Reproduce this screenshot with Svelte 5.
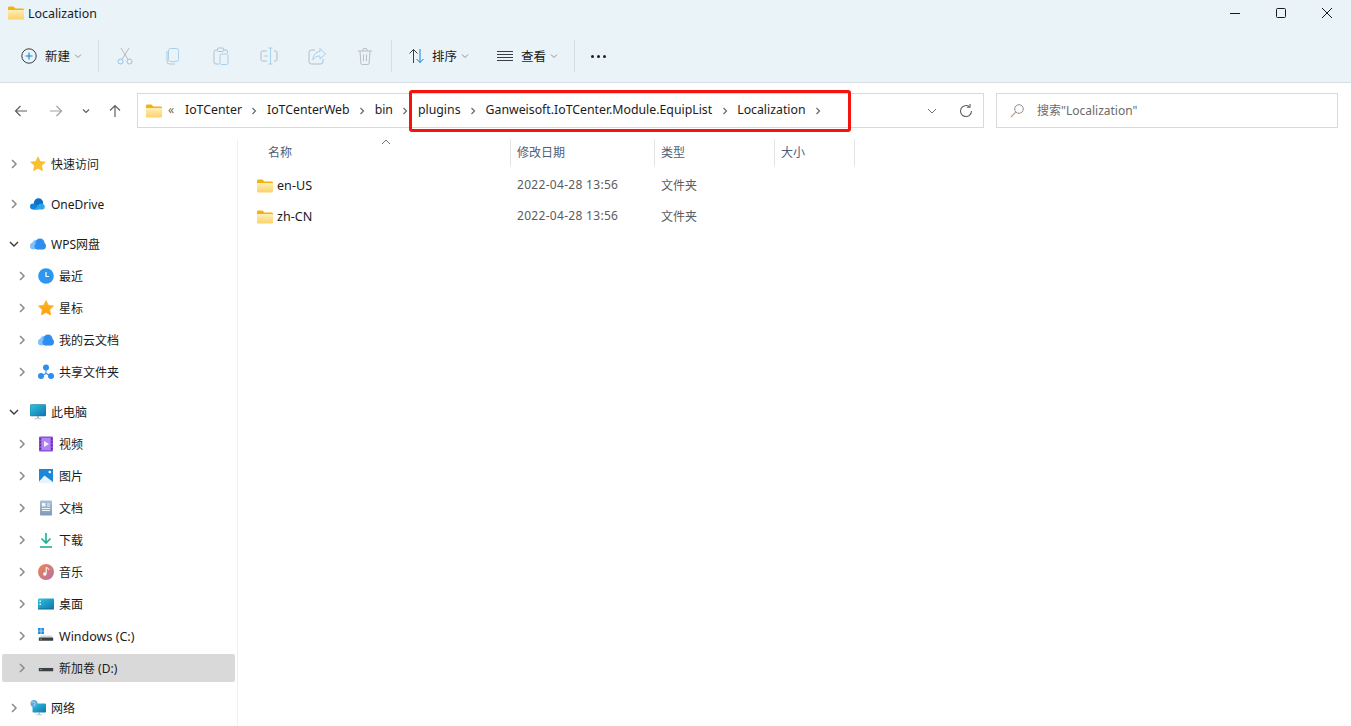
<script>
  const crumbs = ['IoTCenter', 'IoTCenterWeb', 'bin', 'plugins', 'Ganweisoft.IoTCenter.Module.EquipList', 'Localization']

  const disabledTools = ['cut', 'copy', 'paste', 'rename', 'share', 'trash']

  // sidebar groups, each row: label, icon, level, open, selected
  const groups = [
    [{ label: '快速访问', icon: 'star', level: 0 }],
    [{ label: 'OneDrive', icon: 'onedrive', level: 0 }],
    [
      { label: 'WPS网盘', icon: 'wps', level: 0, open: true },
      { label: '最近', icon: 'clock', level: 1 },
      { label: '星标', icon: 'starOrange', level: 1 },
      { label: '我的云文档', icon: 'wps', level: 1 },
      { label: '共享文件夹', icon: 'shared', level: 1 }
    ],
    [
      { label: '此电脑', icon: 'pc', level: 0, open: true },
      { label: '视频', icon: 'video', level: 1 },
      { label: '图片', icon: 'picture', level: 1 },
      { label: '文档', icon: 'doc', level: 1 },
      { label: '下载', icon: 'download', level: 1 },
      { label: '音乐', icon: 'music', level: 1 },
      { label: '桌面', icon: 'desktop', level: 1 },
      { label: 'Windows (C:)', icon: 'driveC', level: 1, latin: true },
      { label: '新加卷 (D:)', icon: 'drive', level: 1, selected: true }
    ],
    [{ label: '网络', icon: 'network', level: 0 }]
  ]

  const columns = [
    { label: '名称', width: 273, indent: 30 },
    { label: '修改日期', width: 144, indent: 6 },
    { label: '类型', width: 120, indent: 6 },
    { label: '大小', width: 80, indent: 6 }
  ]

  const files = [
    { name: 'en-US', date: '2022-04-28 13:56', type: '文件夹' },
    { name: 'zh-CN', date: '2022-04-28 13:56', type: '文件夹' }
  ]
</script>

{#snippet folder()}
  <svg class="ic16" viewBox="0 0 16 16">
    <path d="M0 3C0 2.200.6 1.500 1.400 1.500h4l2 2h7.200c.8 0 1.400.6 1.400 1.400V8H0z" fill="#f2b20f" />
    <path d="M0 5h15c.6 0 1 .4 1 1v7.200c0 .7-.6 1.300-1.300 1.300H1.300C.6 14.500 0 13.900 0 13.200z" fill="url(#faceGrad)" />
  </svg>
{/snippet}

{#snippet chevron(open)}
  <svg class="chev" viewBox="0 0 10 10" fill="none">
    {#if open}
      <path d="M1 3l4 4 4-4" stroke="#3b3b3b" stroke-width="1.4" />
    {:else}
      <path d="M3 1l4 4-4 4" stroke="#8a8a8a" stroke-width="1.5" />
    {/if}
  </svg>
{/snippet}

{#snippet caret()}
  <svg class="caret" viewBox="0 0 8 8" fill="none"><path d="M1 2.500l3 3 3-3" stroke="#8c9499" /></svg>
{/snippet}

{#snippet sep()}
  <svg class="crumb-sep" viewBox="0 0 8 10" fill="none"><path d="M2.500 2l3 3-3 3" stroke="#5f6b73" stroke-width="1.200" /></svg>
{/snippet}

{#snippet tool(name)}
  <svg class="ic20" viewBox="0 0 20 20" fill="none" stroke="#a9c9de" stroke-width="1">
    {#if name === 'cut'}
      <circle cx="5.500" cy="15.500" r="2.500" stroke="#8fc4ea" /><circle cx="14.500" cy="15.500" r="2.500" stroke="#8fc4ea" />
      <path d="M7 13.500L14 2M13 13.500L6 2" stroke="#b5bcc2" />
    {:else if name === 'copy'}
      <rect x="5.500" y="2.500" width="10" height="13" rx="2" stroke="#a5d0ee" />
      <path d="M4 5v10.500a2.500 2.500 0 0 0 2.500 2.500H12" stroke="#b5c4ce" />
    {:else if name === 'paste'}
      <path d="M6 4H5a2 2 0 0 0-2 2v10a2 2 0 0 0 2 2h3M13 4h2a1.500 1.500 0 0 1 1.500 1.500V7" stroke="#b8bfc5" />
      <rect x="6.500" y="2" width="6" height="3.500" rx="1" stroke="#b8bfc5" />
      <rect x="9" y="8" width="8" height="10.500" rx="1.500" stroke="#a5d0ee" />
    {:else if name === 'rename'}
      <path d="M8 5H3.500A1.500 1.500 0 0 0 2 6.500v7A1.500 1.500 0 0 0 3.500 15H8M15 5h1.500A1.500 1.500 0 0 1 18 6.500v7a1.500 1.500 0 0 1-1.500 1.500H15" stroke="#b5bcc2" />
      <path d="M11.500 2v16M9.500 2h4M9.500 18h4M5 10h4" stroke="#a5d0ee" />
    {:else if name === 'share'}
      <path d="M8 4H4.500A2.500 2.500 0 0 0 2 6.500v9A2.500 2.500 0 0 0 4.500 18h9a2.500 2.500 0 0 0 2.500-2.500V13" stroke="#b5bcc2" />
      <path d="M13 2.500L18.500 8 13 13v-3c-3.500 0-5.500 1-7 4 0-5 2.500-8 7-8.500z" stroke="#a5d0ee" />
    {:else}
      <path d="M3 5h14M8 5V3.500A1 1 0 0 1 9 2.500h2a1 1 0 0 1 1 1V5M5 5l.8 12a1.500 1.500 0 0 0 1.500 1.500h5.400a1.500 1.500 0 0 0 1.500-1.500L15 5M8.500 8.500v6.500M11.500 8.500v6.500" stroke="#b8bfc5" />
    {/if}
  </svg>
{/snippet}

{#snippet navIcon(name)}
  <svg class="ic16" viewBox="0 0 16 16" fill="none" stroke={name === 'forward' ? '#9ca3a8' : '#5b6166'} stroke-width="1.200">
    {#if name === 'back'}
      <path d="M14 8H2.500M7.500 3l-5 5 5 5" />
    {:else if name === 'forward'}
      <path d="M2 8h11.500M8.500 3l5 5-5 5" />
    {:else}
      <path d="M8 14V2.500M3 7.500l5-5 5 5" />
    {/if}
  </svg>
{/snippet}

{#snippet sideIcon(name)}
  {#if name === 'star'}
    <svg class="ic16" viewBox="0 0 16 16"><path d="M8 .8l2.200 4.700 5.100.6-3.800 3.500 1 5.100L8 12.200l-4.500 2.500 1-5.100L.7 6.100l5.100-.6z" fill="#fbc02d" stroke="#f0a818" stroke-width=".5" /></svg>
  {:else if name === 'starOrange'}
    <svg class="ic16" viewBox="0 0 16 16"><path d="M8 .6l2.300 4.700 5.200.7-3.800 3.700.9 5.200L8 12.400l-4.600 2.500.9-5.200L.5 6l5.200-.7z" fill="url(#orangeGrad)" stroke-linejoin="round" stroke="#fdb022" stroke-width=".8" /></svg>
  {:else if name === 'onedrive'}
    <svg class="ic16" viewBox="0 0 16 16">
      <circle cx="8.500" cy="7" r="4.700" fill="#0f6fc6" />
      <circle cx="3" cy="10.500" r="3" fill="#1183d8" />
      <rect x="3" y="8.500" width="5" height="5" fill="#1183d8" />
      <path d="M5 13.500l3.500-5 2.500-.9 2 .4a3 3 0 0 1 0 5.500z" fill="#28a8ea" />
    </svg>
  {:else if name === 'wps'}
    <svg class="ic16" viewBox="0 0 16 16">
      <g fill="#7ec0fb"><circle cx="3.500" cy="10" r="3.500" /><circle cx="6" cy="7.500" r="3.500" /></g>
      <g fill="#2f8df0"><circle cx="10" cy="7" r="4.500" /><circle cx="12.500" cy="10" r="3.500" /><circle cx="7.500" cy="10.500" r="3" /><rect x="7.500" y="9" width="5" height="4.500" /></g>
    </svg>
  {:else if name === 'clock'}
    <svg class="ic16" viewBox="0 0 16 16"><circle cx="8" cy="8" r="7.800" fill="#2c96f3" /><path d="M8 4v4.500h3" fill="none" stroke="#fff" stroke-width="1.200" /></svg>
  {:else if name === 'shared'}
    <svg class="ic16" viewBox="0 0 16 16" fill="#2f8df0"><circle cx="8" cy="3.500" r="3" /><circle cx="3" cy="12" r="3" /><circle cx="13" cy="12" r="3" /><path d="M7.500 5h1v4l4 2.500-.5 1L8 10l-4 2.500-.5-1 4-2.500z" /></svg>
  {:else if name === 'pc'}
    <svg class="ic16" viewBox="0 0 16 16">
      <rect x="0" y="0.500" width="16" height="11.500" rx="1.200" fill="url(#pcGrad)" stroke="#13738f" stroke-width=".5" />
      <path d="M7 12h2v2H7z" fill="#9fb4c0" /><path d="M4.500 14.200h7v1h-7z" fill="#b7c6cf" />
    </svg>
  {:else if name === 'video'}
    <svg class="ic16" viewBox="0 0 16 16">
      <rect x="1" y=".5" width="14" height="15" rx="1" fill="#8e51dc" />
      <rect x="3.500" y="2" width="9" height="12" fill="#b083ee" />
      <path d="M6 5l5 3-5 3z" fill="#f4ecff" />
      <path d="M1.700 2h1v1.500h-1zM1.700 5.300h1v1.500h-1zM1.700 8.600h1v1.500h-1zM1.700 12h1v1.500h-1zM13.300 2h1v1.500h-1zM13.300 5.300h1v1.500h-1zM13.300 8.600h1v1.500h-1zM13.300 12h1v1.500h-1z" fill="#3c1d78" />
    </svg>
  {:else if name === 'picture'}
    <svg class="ic16" viewBox="0 0 16 16">
      <rect x="1" y="1" width="14" height="14" fill="#1b87d8" />
      <circle cx="11.800" cy="4" r="1.300" fill="#fff" />
      <path d="M1 13.500L6.500 7.500 15 14v1H1z" fill="#e9f3fb" />
    </svg>
  {:else if name === 'doc'}
    <svg class="ic16" viewBox="0 0 16 16">
      <rect x="2" y="0.500" width="12" height="15" rx="1" fill="url(#docGrad)" />
      <path d="M4 3h3.500v3.500H4zM9 3.500h3v1H9zM9 5.500h3v1H9zM4 8h8v1H4zM4 10h8v1H4z" fill="#f0f5fa" />
    </svg>
  {:else if name === 'download'}
    <svg class="ic16" viewBox="0 0 16 16" fill="none" stroke="#19b394" stroke-width="1.600"><path d="M8 1v9.500M3.500 6.500L8 11l4.500-4.500" /><path d="M2 15h12" /></svg>
  {:else if name === 'music'}
    <svg class="ic16" viewBox="0 0 16 16">
      <circle cx="8" cy="8" r="8" fill="url(#musicGrad)" />
      <path d="M8.200 3.500v6" stroke="#fff" stroke-width="1.100" /><circle cx="6.800" cy="10" r="1.700" fill="#fff" /><path d="M8.200 3.500c1.600.3 2.500 1 2.600 2.400" fill="none" stroke="#fff" />
    </svg>
  {:else if name === 'desktop'}
    <svg class="ic16" viewBox="0 0 16 16">
      <rect x="0" y="2.500" width="16" height="10.500" rx="1" fill="url(#pcGrad)" />
      <path d="M1.500 4.500h1.500V6H1.500zM1.500 7.500h1.500V9H1.500z" fill="#e6f7fc" />
      <path d="M0 12.500h16V13.500H0z" fill="#0d6b86" />
    </svg>
  {:else if name === 'driveC'}
    <svg class="ic16" viewBox="0 0 16 16">
      <path d="M0 0h2.700v2.700H0zM3.300 0H6v2.700H3.300zM0 3.300h2.700V6H0zM3.300 3.300H6V6H3.300z" fill="#1f8fe0" />
      <path d="M1.500 9.500L3 7.500h10.500l1.500 2z" fill="#d3d6d8" />
      <rect x=".8" y="9.500" width="14.400" height="3.300" rx=".6" fill="#3b4144" />
      <rect x="2.300" y="10.700" width="1.500" height="1" fill="#4ed964" />
    </svg>
  {:else if name === 'drive'}
    <svg class="ic16" viewBox="0 0 16 16">
      <path d="M2 8l1.500-1.500h9L14 8z" fill="#d3d6d8" />
      <rect x=".8" y="8" width="14.400" height="3.300" rx=".6" fill="#3b4144" />
      <rect x="2.300" y="9.100" width="1.500" height="1" fill="#4ed964" />
    </svg>
  {:else if name === 'network'}
    <svg class="ic16" viewBox="0 0 16 16">
      <rect x="2.500" y="3.500" width="13.500" height="9" rx="1" fill="url(#pcGrad)" />
      <path d="M8.500 12.500h1.500v1.800H8.500z" fill="#9fb4c0" /><path d="M6.500 14.300h5.500v1H6.500z" fill="#b7c6cf" />
      <circle cx="4" cy="3.500" r="3.500" fill="#5aa9dc" /><path d="M1.500 2.500c1.500-.8 3-.6 3.500.5s-1 1.500-1 3" stroke="#d2e8f5" fill="none" stroke-width=".8" />
    </svg>
  {/if}
{/snippet}

<svg class="defs" aria-hidden="true">
  <defs>
    <linearGradient id="faceGrad" x1="0" y1="0" x2="0" y2="1"><stop offset="0" stop-color="#ffeeb8" /><stop offset="1" stop-color="#fcd268" /></linearGradient>
    <linearGradient id="orangeGrad" x1="0" y1="0" x2="0" y2="1"><stop offset="0" stop-color="#ffb81f" /><stop offset="1" stop-color="#fd9c12" /></linearGradient>
    <linearGradient id="pcGrad" x1="0" y1="0" x2="1" y2="1"><stop offset="0" stop-color="#2cc6df" /><stop offset="1" stop-color="#1273ad" /></linearGradient>
    <linearGradient id="docGrad" x1="0" y1="0" x2="0" y2="1"><stop offset="0" stop-color="#a9bfd6" /><stop offset="1" stop-color="#7f9ab8" /></linearGradient>
    <linearGradient id="musicGrad" x1="0" y1="0" x2="1" y2="1"><stop offset="0" stop-color="#ef8550" /><stop offset="1" stop-color="#b66fa8" /></linearGradient>
  </defs>
</svg>

<div class="window">
  <header class="chrome">
    <div class="titlebar">
      <div class="title">
        {@render folder()}
        <span>Localization</span>
      </div>
      <div class="win-controls">
        <svg class="ic16" viewBox="0 0 16 16" fill="none" stroke="#1a1a1a"><path d="M3 8.500h10" /></svg>
        <svg class="ic16" viewBox="0 0 16 16" fill="none" stroke="#1a1a1a"><rect x="3.500" y="3.500" width="9" height="9" rx="1" /></svg>
        <svg class="ic16" viewBox="0 0 16 16" fill="none" stroke="#1a1a1a"><path d="M3 3l10 10M13 3L3 13" /></svg>
      </div>
    </div>

    <div class="toolbar">
      <button class="tb-btn new">
        <svg class="ic16" viewBox="0 0 16 16" fill="none">
          <circle cx="8" cy="8" r="7.200" stroke="#3a3f44" />
          <path d="M8 4.500v7M4.500 8h7" stroke="#1680d6" stroke-width="1.100" />
        </svg>
        <span>新建</span>
        {@render caret()}
      </button>
      <i class="tb-sep"></i>
      <div class="tool-group">
        {#each disabledTools as t}
          <span class="tool">{@render tool(t)}</span>
        {/each}
      </div>
      <i class="tb-sep"></i>
      <button class="tb-btn sort">
        <svg class="ic20" viewBox="0 0 20 20" fill="none">
          <path d="M6.500 17V3.500M2.500 7.500l4-4 4 4" stroke="#3a3f44" />
          <path d="M13 3v13.500M9.500 13l3.500 3.500 3.500-3.500" stroke="#1680d6" />
        </svg>
        <span>排序</span>
        {@render caret()}
      </button>
      <button class="tb-btn view">
        <svg class="ic16" viewBox="0 0 16 16" fill="none" stroke="#3a3f44"><path d="M0 3.500h16M0 6.500h16M0 9.500h16M0 12.500h16" /></svg>
        <span>查看</span>
        {@render caret()}
      </button>
      <i class="tb-sep"></i>
      <span class="dots"><b></b><b></b><b></b></span>
    </div>
  </header>

  <div class="navbar">
    <div class="nav-btns">
      <span class="nav-btn">{@render navIcon('back')}</span>
      <span class="nav-btn">{@render navIcon('forward')}</span>
      <span class="nav-mini">
        <svg class="caret" viewBox="0 0 8 8" fill="none"><path d="M1 2.500l3 3 3-3" stroke="#5b6166" stroke-width="1.200" /></svg>
      </span>
      <span class="nav-btn">{@render navIcon('up')}</span>
    </div>

    <div class="address">
      {@render folder()}
      <span class="more">«</span>
      {#each crumbs as c}
        <span class="crumb">{c}</span>
        {@render sep()}
      {/each}
      <span class="addr-end">
        <svg class="ic10" viewBox="0 0 10 10" fill="none"><path d="M1 3l4 4 4-4" stroke="#6b7278" /></svg>
        <svg class="ic16" viewBox="0 0 16 16" fill="none" stroke="#5b6166" stroke-width="1.100">
          <path d="M13.500 8A5.500 5.500 0 1 1 11.500 3.800" />
          <path d="M12 1v3.300H8.800" />
        </svg>
      </span>
    </div>

    <div class="search">
      <svg class="ic16" viewBox="0 0 16 16" fill="none">
        <circle cx="10" cy="6" r="4.300" stroke="#8a8f94" />
        <path d="M6.800 9.200L2 14" stroke="#c49a7a" stroke-width="1.100" />
      </svg>
      <span>搜索"Localization"</span>
    </div>

    <div class="highlight"></div>
  </div>

  <div class="body">
    <aside class="sidebar">
      {#each groups as group}
        <div class="group">
          {#each group as item}
            <div class="row" class:selected={item.selected} class:sub={item.level === 1}>
              <span class="chev-box">{@render chevron(item.open)}</span>
              <span class="icon-box">{@render sideIcon(item.icon)}</span>
              <span class="label" class:latin={item.latin}>{item.label}</span>
            </div>
          {/each}
        </div>
      {/each}
    </aside>

    <main class="files">
      <div class="head">
        {#each columns as col}
          <div class="col" style="width: {col.width}px; padding-left: {col.indent}px">{col.label}</div>
        {/each}
        <svg class="sort-arrow" viewBox="0 0 10 6" fill="none"><path d="M1 5l4-4 4 4" stroke="#70757a" /></svg>
      </div>
      <div class="list">
        {#each files as f}
          <div class="file">
            <span class="f-name">
              {@render folder()}
              <span class="f-text">{f.name}</span>
            </span>
            <span class="f-date">{f.date}</span>
            <span class="f-type">{f.type}</span>
          </div>
        {/each}
      </div>
    </main>
  </div>
</div>

<style>
  :global(body) {
    margin: 0;
    background: #fff;
    overflow: hidden;
  }

  .defs {
    position: absolute;
    width: 0;
    height: 0;
  }

  .window {
    width: 1351px;
    height: 726px;
    overflow: hidden;
    display: flex;
    flex-direction: column;
    font-family: "Noto Sans", "Noto Sans CJK SC", sans-serif;
    font-size: 12px;
    color: #1b1b1b;
  }

  .ic16 { width: 16px; height: 16px; flex-shrink: 0; display: block; }
  .ic20 { width: 20px; height: 20px; flex-shrink: 0; display: block; }
  .ic10 { width: 10px; height: 10px; flex-shrink: 0; display: block; }
  .chev { width: 10px; height: 10px; display: block; }
  .caret { width: 8px; height: 8px; display: block; flex-shrink: 0; }

  .chrome {
    height: 82px;
    background: #e9f3f8;
    border-bottom: 1px solid #d8e0e4;
    flex-shrink: 0;
  }

  .titlebar {
    height: 30px;
    display: flex;
    justify-content: space-between;
    padding: 0 16px 4px 8px;
    box-sizing: border-box;
    align-items: center;
  }

  .title {
    display: flex;
    align-items: center;
    gap: 4px;
    font-size: 12.4px;
  }

  .win-controls {
    display: flex;
    gap: 30px;
  }

  .toolbar {
    height: 52px;
    display: flex;
    align-items: center;
    padding-left: 21px;
  }

  .tb-btn {
    border: none;
    background: none;
    padding: 0;
    font: inherit;
    font-size: 12.5px;
    color: inherit;
    display: flex;
    align-items: center;
    box-sizing: border-box;
  }

  .tb-btn span { margin: 0 4px 0 8px; padding-bottom: 2px; }

  .new { width: 77px; }

  .tb-sep {
    width: 1px;
    height: 32px;
    background: #d6dfe4;
    flex-shrink: 0;
  }

  .tool-group {
    display: flex;
    padding-left: 2px;
    width: 292px;
    box-sizing: border-box;
  }

  .tool {
    width: 48px;
    display: flex;
    justify-content: center;
  }

  .sort { width: 105px; padding-left: 15px; }
  .sort span { margin-left: 5px; }
  .view { width: 77px; }

  .dots {
    display: flex;
    gap: 3px;
    margin-left: 16px;
  }

  .dots b {
    width: 3px;
    height: 3px;
    border-radius: 50%;
    background: #1f1f1f;
  }

  .navbar {
    position: relative;
    display: flex;
    height: 35px;
    padding-top: 10px;
    padding-bottom: 11px;
    flex-shrink: 0;
  }

  .nav-btns {
    width: 137px;
    display: flex;
    align-items: center;
    padding-left: 13px;
    box-sizing: border-box;
  }

  .nav-btn {
    width: 16px;
    display: flex;
  }

  .nav-btn:nth-child(2) { margin-left: 19px; }
  .nav-mini { margin-left: 18px; margin-right: 17px; }

  .address {
    width: 847px;
    box-sizing: border-box;
    border: 1px solid #d9d9d9;
    display: flex;
    align-items: center;
    padding-left: 8px;
  }

  .more {
    margin: 0 10px 0 5px;
    color: #5f6b73;
    width: 8px;
    text-align: center;
    padding-bottom: 2px;
  }

  .crumb {
    white-space: nowrap;
    font-size: 12.3px;
    padding-bottom: 2px;
  }

  .crumb-sep {
    width: 8px;
    height: 10px;
    margin: 0 8.5px;
    flex-shrink: 0;
  }

  .addr-end {
    margin-left: auto;
    display: flex;
    align-items: center;
    gap: 21px;
    padding-right: 9px;
  }

  .search {
    margin-left: 12px;
    width: 342px;
    box-sizing: border-box;
    border: 1px solid #d9d9d9;
    display: flex;
    align-items: center;
    padding-left: 12px;
    gap: 12px;
    color: #6b6b6b;
  }

  .search span { padding-bottom: 2px; }

  .highlight {
    position: absolute;
    left: 409px;
    top: 7px;
    width: 442px;
    height: 42px;
    box-sizing: border-box;
    border: 3px solid #f5130f;
    border-radius: 3px;
  }

  .body {
    flex: 1;
    display: flex;
    min-height: 0;
  }

  .sidebar {
    width: 238px;
    box-sizing: border-box;
    border-right: 1px solid #f0f0f0;
    padding: 11px 2px 0;
    flex-shrink: 0;
  }

  .group {
    display: flex;
    flex-direction: column;
    gap: 4px;
  }

  .group + .group { margin-top: 12px; }

  .row {
    height: 28px;
    width: 233px;
    display: flex;
    align-items: center;
    border-radius: 2px;
    flex-shrink: 0;
  }

  .row.sub { padding-left: 8px; box-sizing: border-box; }
  .row.selected { background: #d9d9d9; }

  .chev-box {
    width: 24px;
    display: flex;
    justify-content: center;
    flex-shrink: 0;
  }

  .icon-box {
    width: 16px;
    margin-left: 4px;
    display: flex;
    justify-content: center;
    flex-shrink: 0;
  }

  .label { margin-left: 5px; white-space: nowrap; }
  .label.latin { font-size: 12.5px; }

  .files { flex: 1; min-width: 0; }

  .head {
    position: relative;
    display: flex;
    height: 27px;
    color: #4c607a;
  }

  .col {
    box-sizing: border-box;
    border-right: 1px solid #e5e5e5;
    display: flex;
    align-items: center;
    padding-bottom: 2px;
  }

  .sort-arrow {
    position: absolute;
    left: 143px;
    top: 0;
    width: 10px;
    height: 6px;
  }

  .list { padding-top: 4px; }

  .file {
    height: 31px;
    display: flex;
    align-items: center;
  }

  .f-name {
    width: 279px;
    padding-left: 19px;
    box-sizing: border-box;
    display: flex;
    align-items: center;
    gap: 4px;
  }

  .f-text { font-size: 12.6px; }

  .f-date {
    width: 144px;
    color: #5c5c5c;
    letter-spacing: 0.3px;
    padding-bottom: 2px;
  }

  .f-type {
    color: #5c5c5c;
    padding-bottom: 2px;
  }
</style>
